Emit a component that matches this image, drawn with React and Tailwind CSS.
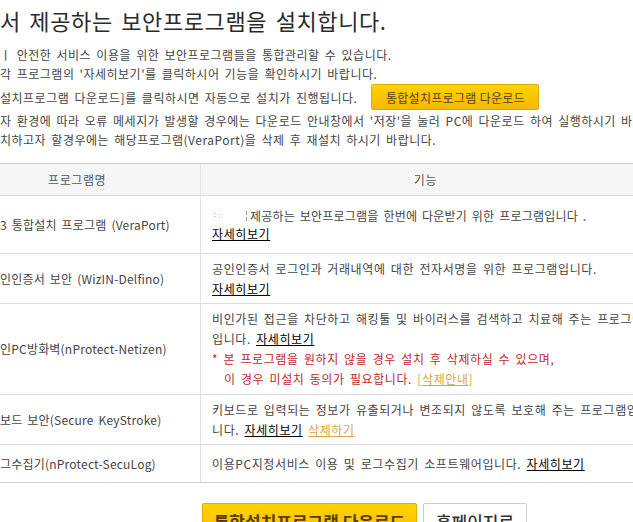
import React from "react";

const font = "font-['Noto_Sans_CJK_KR','Noto_Sans',sans-serif]";

function Link({ children, orange }) {
  return (
    <span className={orange ? "underline text-[#dba343]" : "underline text-black"}>{children}</span>
  );
}

function Row({ h, left, children }) {
  return (
    <div className={`flex ${h} border-b border-[#dcdcdc]`}>
      <div className="w-[201px] shrink-0 border-r border-[#e3e3e3] flex items-center text-[#444] tracking-[0.2px]">
        {left}
      </div>
      <div className="flex-1 flex items-center pl-[11px] text-[#444]">
        <div>{children}</div>
      </div>
    </div>
  );
}

export default function App() {
  return (
    <div
      className={`w-[633px] h-[522px] overflow-hidden bg-white text-[#444] ${font} whitespace-nowrap [word-spacing:2px] tracking-[0.5px]`}
    >
      <h1 className="pt-[6px] h-[40px] text-[22px] leading-[28px] text-[#2a2a2a] [word-spacing:3px] tracking-[0.6px]">
        서 제공하는 보안프로그램을 설치합니다.
      </h1>
      <div className="mt-[5px] text-[12px] leading-[19px]">
        <p>ㅣ 안전한 서비스 이용을 위한 보안프로그램들을 통합관리할 수 있습니다.</p>
        <p>각 프로그램의 '자세히보기'를 클릭하시어 기능을 확인하시기 바랍니다.</p>
        <div className="flex items-center h-[28px]">
          <span>설치프로그램 다운로드]를 클릭하시면 자동으로 설치가 진행됩니다.</span>
          <span className="ml-[14px] w-[168px] h-[26px] flex items-center justify-center rounded-[2px] border border-[#e5a900] bg-gradient-to-b from-[#ffd400] to-[#f5b800] text-[#5a3b00] [word-spacing:0px] tracking-[0.3px]">
            통합설치프로그램 다운로드
          </span>
        </div>
        <p>자 환경에 따라 오류 메세지가 발생할 경우에는 다운로드 안내창에서 '저장'을 눌러 PC에 다운로드 하여 실행하시기 바랍니다.</p>
        <p>치하고자 할경우에는 해당프로그램(VeraPort)을 삭제 후 재설치 하시기 바랍니다.</p>
      </div>

      <div className="mt-[14px] w-[650px] text-[12px] leading-[20px] tracking-[0.6px]">
        <div className="flex h-[33px] border-t border-b border-[#cfcfcf] border-b-[#dcdcdc] bg-[#f6f6f6] text-[#555]">
          <div className="w-[201px] shrink-0 border-r border-[#e3e3e3] flex items-center pl-[48px]">
            프로그램명
          </div>
          <div className="flex-1 flex items-center justify-center">기능</div>
        </div>

        <Row h="h-[58px]" left="3 통합설치 프로그램 (VeraPort)">
          <div className="leading-[18px] flex items-center">
            <svg width="38" height="14" viewBox="0 0 38 14">
              <g fill="#c9c9c9">
                <rect x="1" y="4" width="1" height="1" />
                <rect x="3" y="4" width="1" height="1" />
                <rect x="1" y="7" width="1" height="1" />
                <rect x="3" y="7" width="1" height="1" />
                <rect x="7" y="5" width="1" height="1" />
                <rect x="9" y="5" width="1" height="1" />
                <rect x="7" y="8" width="1" height="1" />
                <rect x="10" y="8" width="1" height="1" />
              </g>
              <rect x="34" y="2" width="1" height="4" fill="#9a9a9a" />
              <rect x="34" y="8" width="1" height="4" fill="#9a9a9a" />
            </svg>
            <span className="tracking-[0.2px]">제공하는 보안프로그램을 한번에 다운받기 위한 프로그램입니다 .</span>
          </div>
          <div className="leading-[18px]">
            <Link>자세히보기</Link>
          </div>
        </Row>

        <Row h="h-[50px]" left="인인증서 보안 (WizIN-Delfino)">
          <div>공인인증서 로그인과 거래내역에 대한 전자서명을 위한 프로그램입니다.</div>
          <div>
            <Link>자세히보기</Link>
          </div>
        </Row>

        <Row h="h-[91px]" left="인PC방화벽(nProtect-Netizen)">
          <div>비인가된 접근을 차단하고 해킹툴 및 바이러스를 검색하고 치료해 주는 프로그램</div>
          <div>
            입니다. <Link>자세히보기</Link>
          </div>
          <div className="text-[#c2272d]">* 본 프로그램을 원하지 않을 경우 설치 후 삭제하실 수 있으며,</div>
          <div className="text-[#c2272d] pl-[12px]">
            이 경우 미설치 동의가 필요합니다. <Link orange>[삭제안내]</Link>
          </div>
        </Row>

        <Row h="h-[50px]" left="보드 보안(Secure KeyStroke)">
          <div>키보드로 입력되는 정보가 유출되거나 변조되지 않도록 보호해 주는 프로그램입</div>
          <div>
            니다. <Link>자세히보기</Link> <Link orange>삭제하기</Link>
          </div>
        </Row>

        <div className="flex h-[38px] border-b border-[#cfcfcf]">
          <div className="w-[201px] shrink-0 border-r border-[#e3e3e3] flex items-center text-[#444] tracking-[0.2px]">
            그수집기(nProtect-SecuLog)
          </div>
          <div className="flex-1 flex items-center pl-[11px] text-[#444]">
            <div>
              이용PC지정서비스 이용 및 로그수집기 소프트웨어입니다. <Link>자세히보기</Link>
            </div>
          </div>
        </div>
      </div>

      <div className="mt-[20px] flex pl-[202px] gap-[6px] [word-spacing:0px] tracking-normal">
        <div className="w-[215px] h-[42px] rounded-[2px] border border-[#e5a900] bg-gradient-to-b from-[#ffd400] to-[#f5b800] flex justify-center pt-[7px] text-[17px] leading-[22px] font-bold text-[#5a3b00]">
          통합설치프로그램 다운로드
        </div>
        <div className="w-[104px] h-[42px] rounded-[2px] border border-[#cccccc] bg-white flex justify-center pt-[7px] text-[17px] leading-[22px] font-medium text-[#333]">
          홈페이지로
        </div>
      </div>
    </div>
  );
}
